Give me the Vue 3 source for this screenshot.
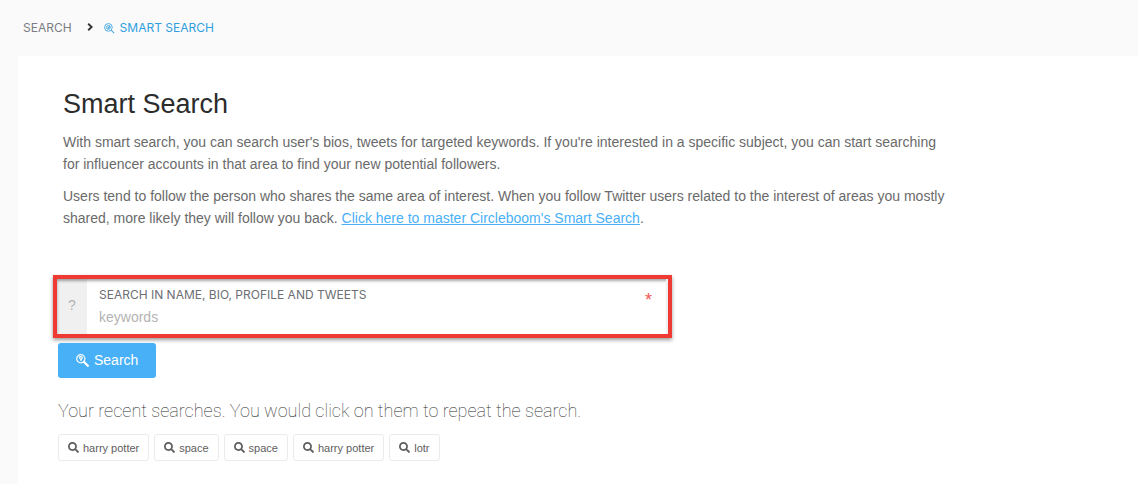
<script setup>
import { ref } from 'vue'

const keywords = ref('')
const recent = ref(['harry potter', 'space', 'space', 'harry potter', 'lotr'])
</script>

<template>
  <div class="page">
    <nav class="breadcrumb" aria-label="Breadcrumb">
      <a class="crumb" href="#search">SEARCH</a>
      <svg class="chevron" viewBox="0 0 6 8" aria-hidden="true">
        <path d="M1.2 .8 4.6 4 1.2 7.2" fill="none" stroke="currentColor" stroke-width="1.9" />
      </svg>
      <a class="crumb current" href="#smart-search">
        <svg class="crumb-icon" viewBox="0 0 12 12" aria-hidden="true">
          <g fill="none" stroke="currentColor">
            <circle cx="4.8" cy="4.8" r="4.2" stroke-width=".9" />
            <circle cx="4.8" cy="4.8" r="2.1" stroke-width=".9" />
            <path d="m4.1 4.7.7.7 1.7-2M8 8l3.2 3.2" stroke-width="1.1" />
          </g>
        </svg>
        <span>SMART SEARCH</span>
      </a>
    </nav>

    <main class="card">
      <section class="intro">
        <h1>Smart Search</h1>
        <p>
          With smart search, you can search user's bios, tweets for targeted keywords. If you're
          interested in a specific subject, you can start searching for influencer accounts in that
          area to find your new potential followers.
        </p>
        <p>
          Users tend to follow the person who shares the same area of interest. When you follow
          Twitter users related to the interest of areas you mostly shared, more likely they will
          follow you back.
          <a href="#guide">Click here to master Circleboom's Smart Search</a>.
        </p>
      </section>

      <form @submit.prevent>
        <div class="highlight">
          <div class="field">
            <span class="help">?</span>
            <div class="entry">
              <label for="keywords">SEARCH IN NAME, BIO, PROFILE AND TWEETS</label>
              <input id="keywords" v-model="keywords" type="text" placeholder="keywords" />
              <span class="required" aria-hidden="true">*</span>
            </div>
          </div>
        </div>
        <button class="submit" type="submit">
          <svg class="submit-icon" viewBox="0 0 13 13" aria-hidden="true">
            <g fill="none" stroke="currentColor">
              <circle cx="4.8" cy="4.8" r="4.1" stroke-width="1.2" />
              <path d="M3.1 3.4c.5-1 2.8-1 3.2 0 .4 1.2-1.5 1.2-1.5 3.6M3.2 3.5l1.6 2" stroke-width="1.2" />
              <path d="m7.8 7.8 4 4" stroke-width="2.3" stroke-linecap="round" />
            </g>
          </svg>
          <span>Search</span>
        </button>
      </form>

      <section class="recent">
        <h2>Your recent searches. You would click on them to repeat the search.</h2>
        <div class="chips">
          <button v-for="(term, i) in recent" :key="i" class="chip" type="button" @click="keywords = term">
            <svg class="chip-icon" viewBox="0 0 512 512" aria-hidden="true">
              <path
                fill="currentColor"
                d="M505 442.700 405.300 343c-4.500-4.500-10.600-7-17-7H372c27.600-35.300 44-79.700 44-128C416 93.100 322.900 0 208 0S0 93.100 0 208s93.100 208 208 208c48.300 0 92.700-16.400 128-44v16.300c0 6.400 2.500 12.500 7 17l99.700 99.700c9.400 9.400 24.600 9.400 33.900 0l28.300-28.300c9.400-9.400 9.400-24.600.1-34zM208 336c-70.700 0-128-57.200-128-128 0-70.700 57.200-128 128-128 70.700 0 128 57.200 128 128 0 70.700-57.200 128-128 128z"
              />
            </svg>
            <span>{{ term }}</span>
          </button>
        </div>
      </section>
    </main>
  </div>
</template>

<style>
body {
  background: #fafafa;
}
</style>

<style scoped>
.page {
  box-sizing: border-box;
  min-height: 100vh;
  display: flex;
  flex-direction: column;
  padding-left: 18px;
  background: #fafafa;
  color: #6a6a6a;
  font-family: "Liberation Sans", Arial, sans-serif;
  font-size: 14px;
  line-height: 22px;
}

.breadcrumb {
  display: flex;
  align-items: center;
  height: 56px;
  padding-left: 5px;
  font-family: Inter, sans-serif;
  font-size: 12px;
}

.crumb {
  display: flex;
  align-items: center;
  gap: 5px;
  color: #7b7d82;
  text-decoration: none;
}

.crumb.current {
  color: #2f9fe0;
}

.chevron {
  width: 6px;
  height: 8px;
  margin: 0 11px 2px 15px;
  color: #333;
}

.crumb-icon {
  width: 11px;
  height: 11px;
}

.card {
  flex: 1;
  padding: 32px 40px 23px;
  background: #fff;
}

.intro {
  max-width: 888px;
  padding-left: 5px;
}

h1 {
  margin: 0 0 11px;
  color: #2c2c2c;
  font-size: 27px;
  font-weight: 400;
  line-height: 32px;
}

p {
  margin: 0 0 10px;
}

p a {
  color: #48b0f7;
}

.highlight {
  max-width: 611px;
  margin: 46px 0 5px -5px;
  border: 4px solid #ee3a33;
  box-shadow: 0 2px 4px rgba(0, 0, 0, 0.4), inset 0 2px 3px rgba(0, 0, 0, 0.35);
}

.field {
  display: flex;
  border-right: 2px solid #f0f0f0;
}

.help {
  display: flex;
  align-items: center;
  justify-content: center;
  width: 30px;
  padding-bottom: 3px;
  box-sizing: border-box;
  background: rgba(0, 0, 0, 0.06);
  color: #b3b3b3;
}

.entry {
  position: relative;
  flex: 1;
  padding: 6px 12px 5px;
}

label {
  display: block;
  color: #6c6e73;
  font-family: Inter, sans-serif;
  font-size: 12px;
  line-height: 20px;
}

input {
  display: block;
  box-sizing: border-box;
  width: 100%;
  height: 24px;
  padding: 0;
  border: 0;
  outline: 0;
  background: transparent;
  color: #626262;
  font: inherit;
}

input::placeholder {
  color: #b3b3b3;
  opacity: 1;
}

.required {
  position: absolute;
  top: 10px;
  right: 14px;
  color: #f55753;
  font-size: 18px;
}

button {
  display: flex;
  align-items: center;
  font-family: inherit;
  cursor: pointer;
}

.submit {
  gap: 5px;
  height: 35px;
  padding: 0 18px 1px;
  border: 0;
  border-radius: 3px;
  background: #48b0f7;
  color: #fff;
  font-size: 14px;
}

.submit-icon {
  width: 13px;
  height: 13px;
}

h2 {
  margin: 21px 0 11px;
  color: #2c2c2c;
  font-family: Roboto, sans-serif;
  font-size: 18px;
  font-weight: 100;
  line-height: 24px;
}

.chips {
  display: flex;
  flex-wrap: wrap;
  gap: 5px;
}

.chip {
  gap: 4px;
  height: 27px;
  padding: 0 9px;
  border: 1px solid #ebebeb;
  border-radius: 3px;
  background: #fff;
  color: #5e5e5e;
  font-size: 11px;
}

.chip-icon {
  width: 11px;
  height: 11px;
}
</style>
